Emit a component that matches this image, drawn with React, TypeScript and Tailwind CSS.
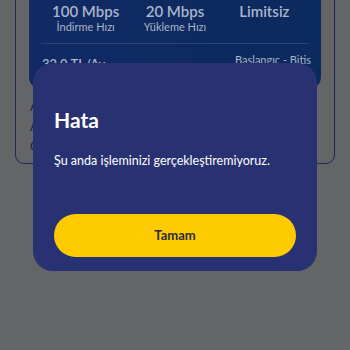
const stats = [
  { value: '100 Mbps', label: 'İndirme Hızı' },
  { value: '20 Mbps', label: 'Yükleme Hızı' },
  { value: 'Limitsiz', label: '' },
];

const App = () => {
  return (
    <div
      className="relative w-[350px] h-[350px] overflow-hidden bg-[#646566]"
      style={{ fontFamily: 'Lato, "Noto Sans", sans-serif' }}
    >
      {/* page behind the dialog */}
      <div className="px-[15px]">
        <div className="-mt-[20px] h-[184px] rounded-[9px] border-[1.5px] border-[#1c2a55] px-[13px]">
          <div className="rounded-[12px] bg-gradient-to-r from-[#112a64] to-[#0b2a5e] pt-[21px] pb-[17px] px-[12px]">
            <div className="grid grid-cols-3 text-center text-[#aab4ca]">
              {stats.map((s) => (
                <div key={s.value} className="flex flex-col items-center">
                  <span className="text-[15px] font-semibold leading-[18px]">{s.value}</span>
                  <span className="text-[11px] leading-[14px]">{s.label}</span>
                </div>
              ))}
            </div>
            <div className="mt-[9px] h-px bg-[#2b4378]" />
            <div className="mt-[8px] flex items-start justify-between px-[1px] text-[#aab4ca]">
              <span className="mt-[4px] text-[13px] font-semibold leading-[16px]">32,0 TL/Ay</span>
              <span className="text-[11px] mr-[-3px]">Baslangıc - Bitis</span>
            </div>
          </div>
          <div className="mt-[9px] flex flex-col gap-[4px] pl-[1px] text-[13px] leading-[16px] text-[#1c2440]">
            <span>Aylık</span>
            <span>Aktif</span>
            <span>Otomatik</span>
          </div>
        </div>
      </div>

      {/* dialog */}
      <div className="absolute left-[33px] top-[63px] w-[284px] rounded-[20px] bg-[#283272] px-[21px] pt-[44px] pb-[14px]">
        <h2 className="text-[21px] font-bold leading-[26px] text-white">Hata</h2>
        <p className="mt-[20px] text-[12.5px] leading-[16px] text-white">
          Şu anda işleminizi gerçekleştiremiyoruz.
        </p>
        <button className="mt-[45px] h-[43px] w-full rounded-full bg-[#fdcb00] text-[13px] font-bold text-[#2b2a3a]">
          Tamam
        </button>
      </div>
    </div>
  );
};

export default App;
